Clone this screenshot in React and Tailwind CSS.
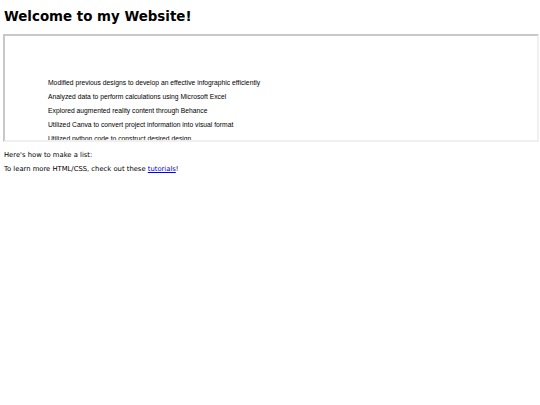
export default function App() {
  const items = [
    "Modified previous designs to develop an effective infographic efficiently",
    "Analyzed data to perform calculations using Microsoft Excel",
    "Explored augmented reality content through Behance",
    "Utilized Canva to convert project information into visual format",
    "Utilized python code to construct desired design",
  ];
  return (
    <div className="bg-white w-[540px] h-[405px] font-['DejaVu_Sans',sans-serif] text-black">
      <h1 className="text-[13.4px] font-bold leading-[18px] pt-[8px] pl-[4px]">Welcome to my Website!</h1>
      <div className="mt-[8px] ml-[3px] w-[536px] h-[108px] border-2 border-t-[#c8c8c8] border-l-[#c8c8c8] border-r-[#f0f0f0] border-b-[#f0f0f0] overflow-hidden">
        <ul className="pt-[40px] pl-[43px] font-['Liberation_Sans',Arial,sans-serif] text-[6.75px]">
          {items.map((t) => (
            <li key={t} className="leading-[14px] whitespace-nowrap">{t}</li>
          ))}
        </ul>
      </div>
      <div className="mt-[6px] pl-[4px] text-[6.8px]">
        <p className="leading-[14px]">Here's how to make a list:</p>
        <p className="leading-[14px]">
          To learn more HTML/CSS, check out these{" "}
          <a href="#" className="text-[#0000ee] underline">tutorials</a>!
        </p>
      </div>
    </div>
  );
}
